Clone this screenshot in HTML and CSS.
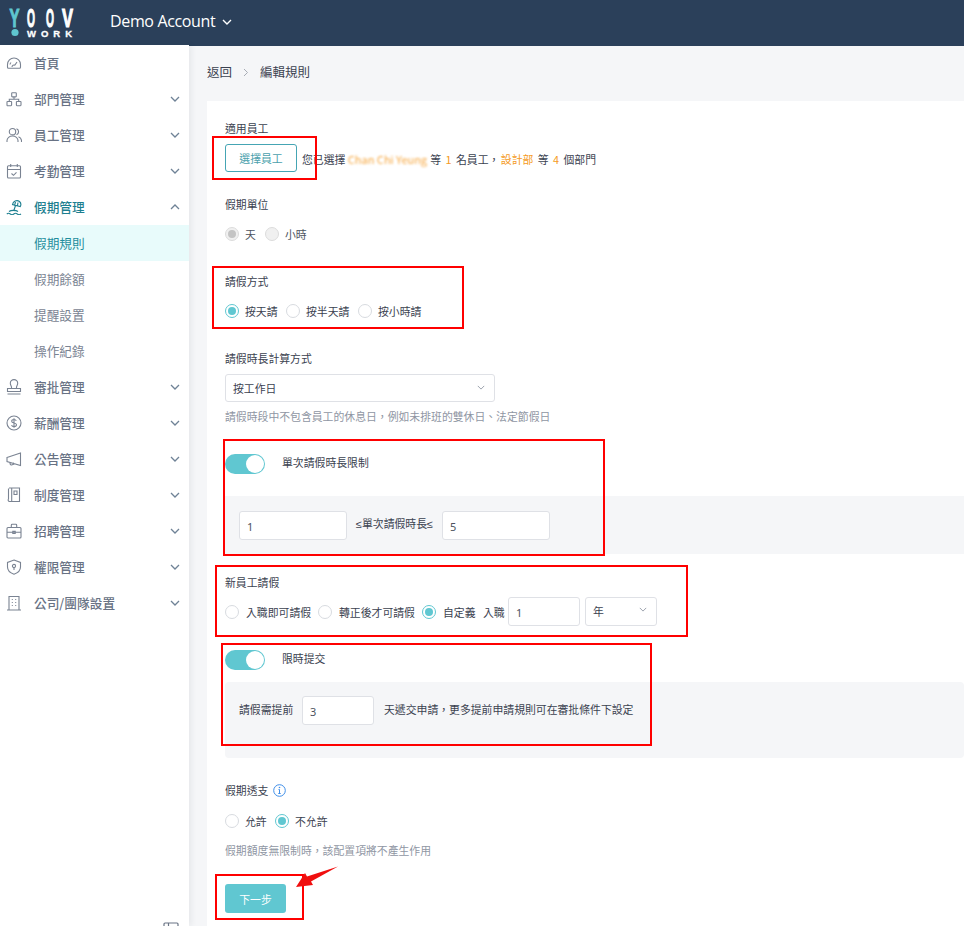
FILE: index.html
```html
<!DOCTYPE html>
<html lang="zh-Hant">
<head>
<meta charset="utf-8">
<title>編輯規則</title>
<link rel="stylesheet" href="styles.css">
</head>
<body>
<div class="app">
  <header class="topbar">
    <svg class="logo" width="90" height="46" viewBox="0 0 90 46">
      <text class="logo-y" x="9.500" y="27" font-size="26" textLength="10" lengthAdjust="spacingAndGlyphs">Y</text>
      <circle cx="15" cy="32.500" r="3.600" fill="#5fc6d0"/>
      <text class="logo-l" x="27" y="27" font-size="26" textLength="8" lengthAdjust="spacingAndGlyphs">O</text>
      <text class="logo-l" x="46" y="27" font-size="26" textLength="8" lengthAdjust="spacingAndGlyphs">O</text>
      <text class="logo-l" x="62" y="27" font-size="26" textLength="11" lengthAdjust="spacingAndGlyphs">V</text>
      <text class="logo-w" x="27" y="36.500" font-size="9.500" textLength="45">WORK</text>
    </svg>
    <div class="account">Demo Account</div>
    <svg class="account-caret" width="10" height="6" viewBox="0 0 10 6"><path d="M1 1l4 4 4-4" fill="none" stroke="#fff" stroke-width="1.400"/></svg>
  </header>
  <div class="layout">
    <nav class="sidebar">
      <a class="nav-item"><svg class="nav-icon" viewBox="0 0 16 16"><path d="M2.500 13.200h11c.6 0 1-.4 1-1V9.500a6.500 6.500 0 0 0-13 0v2.700c0 .6.400 1 1 1z"/><path d="M6 12a2 2 0 0 1 3-1.700M8.600 10.500l2.400-3.500M4 9.500a4 4 0 0 1 1-2"/></svg><span>首頁</span></a>
      <a class="nav-item"><svg class="nav-icon" viewBox="0 0 16 16"><rect x="5.700" y="1.700" width="4.600" height="4.200" rx=".6"/><rect x="1" y="10.500" width="4.600" height="4.200" rx=".6"/><rect x="10.400" y="10.500" width="4.600" height="4.200" rx=".6"/><path d="M8 5.900v2.300M3.300 10.500V8.200h9.400v2.300"/></svg><span>部門管理</span><svg class="chev" viewBox="0 0 10 6"><path d="M1 1l4 4 4-4"/></svg></a>
      <a class="nav-item"><svg class="nav-icon" viewBox="0 0 16 16"><circle cx="6.500" cy="4.700" r="3.200"/><path d="M1 15v-1.500a5.500 4.500 0 0 1 11 0V15M10.500 1.700a3.200 3.200 0 0 1 0 6M12.500 9.800a4.500 4.500 0 0 1 3 3.700V15"/></svg><span>員工管理</span><svg class="chev" viewBox="0 0 10 6"><path d="M1 1l4 4 4-4"/></svg></a>
      <a class="nav-item"><svg class="nav-icon" viewBox="0 0 16 16"><rect x="1.500" y="2.700" width="13" height="12.300" rx="1"/><path d="M1.500 6.500h13M4.700 1v3M11.300 1v3M5.500 10.500l2 1.800 3-3"/></svg><span>考勤管理</span><svg class="chev" viewBox="0 0 10 6"><path d="M1 1l4 4 4-4"/></svg></a>
      <a class="nav-item nav-active"><svg class="nav-icon" viewBox="0 0 16 16"><path d="M6.500 5.500A4.500 4.500 0 0 1 13.500 2.500a4.200 4.200 0 0 1 .8 5zM9.500 3l-1 3.800M12 3.500l-.6 3.500M9.500 6.500l-1.800 5.500"/><path d="M3 12.500c2-1.500 7-1.500 9 0M.8 15c1.200-1 2.300-1 3.500 0s2.300 1 3.500 0 2.300-1 3.500 0 2.300 1 3.700 0"/></svg><span>假期管理</span><svg class="chev" viewBox="0 0 10 6"><path d="M1 5l4-4 4 4"/></svg></a>
      <a class="nav-sub nav-sub-active">假期規則</a>
      <a class="nav-sub">假期餘額</a>
      <a class="nav-sub">提醒設置</a>
      <a class="nav-sub">操作紀錄</a>
      <a class="nav-item"><svg class="nav-icon" viewBox="0 0 16 16"><path d="M5.500 9.500V8c0-1-1.200-2-1.200-3.700a3.700 3.700 0 0 1 7.400 0C11.700 6 10.500 7 10.500 8v1.500M1.500 9.500h13v3h-13zM1.500 15h13"/></svg><span>審批管理</span><svg class="chev" viewBox="0 0 10 6"><path d="M1 1l4 4 4-4"/></svg></a>
      <a class="nav-item"><svg class="nav-icon" viewBox="0 0 16 16"><circle cx="8" cy="8" r="7"/><path d="M10.300 5.800C9.800 4.800 8.800 4.500 8 4.500c-1.300 0-2.300.7-2.300 1.800C5.700 8.700 10.500 7.300 10.500 9.800c0 1-1 1.800-2.500 1.800-1 0-2-.4-2.500-1.400M8 3.300v9.400"/></svg><span>薪酬管理</span><svg class="chev" viewBox="0 0 10 6"><path d="M1 1l4 4 4-4"/></svg></a>
      <a class="nav-item"><svg class="nav-icon" viewBox="0 0 16 16"><path d="M1 6.500l13.500-4.500v12.500L1 10.500zM3.800 11.300l.5 2c.1.500.7.800 1.200.6l2.300-.7-.4-1.500"/></svg><span>公告管理</span><svg class="chev" viewBox="0 0 10 6"><path d="M1 1l4 4 4-4"/></svg></a>
      <a class="nav-item"><svg class="nav-icon" viewBox="0 0 16 16"><path d="M3 1h10.500v13.500H3.500A1.500 1.500 0 0 1 2.500 12V1.500M5.700 1v13.500M8 4h3v3.500H8z"/></svg><span>制度管理</span><svg class="chev" viewBox="0 0 10 6"><path d="M1 1l4 4 4-4"/></svg></a>
      <a class="nav-item"><svg class="nav-icon" viewBox="0 0 16 16"><rect x="1" y="4.500" width="14" height="10.500" rx="1"/><path d="M5.300 4.500V2.200c0-.5.400-.9.900-.9h3.600c.5 0 .9.400.9.900v2.300M1 9.300h14M6.800 8.300h2.400v2.200H6.800z"/></svg><span>招聘管理</span><svg class="chev" viewBox="0 0 10 6"><path d="M1 1l4 4 4-4"/></svg></a>
      <a class="nav-item"><svg class="nav-icon" viewBox="0 0 16 16"><path d="M8 1l6.500 2.500V8c0 3.500-3 6-6.500 7.200C4.500 14 1.500 11.500 1.500 8V3.500z"/><circle cx="8" cy="7" r="1.600"/><path d="M8 8.600v2.400"/></svg><span>權限管理</span><svg class="chev" viewBox="0 0 10 6"><path d="M1 1l4 4 4-4"/></svg></a>
      <a class="nav-item"><svg class="nav-icon" viewBox="0 0 16 16"><path d="M3 15V1.500h10V15M1 15h14M5.800 4.500h1M9.200 4.500h1M5.800 7.500h1M9.200 7.500h1M5.800 10.500h1M9.200 10.500h1"/></svg><span>公司/團隊設置</span><svg class="chev" viewBox="0 0 10 6"><path d="M1 1l4 4 4-4"/></svg></a>
      <svg class="collapse" width="16" height="12" viewBox="0 0 16 12"><path d="M1 11V2c0-.6.400-1 1-1h12c.6 0 1 .4 1 1v9M5.500 1v10" fill="none" stroke="#6b7585" stroke-width="1.200"/></svg>
    </nav>
    <main class="main">
      <div class="crumbs"><span>返回</span><svg class="crumb-sep" width="6" height="9" viewBox="0 0 6 9"><path d="M1 1l3.500 3.500L1 8" fill="none" stroke="#a7acb5" stroke-width="1"/></svg><span>編輯規則</span></div>
      <form class="card">
        <div class="label first">適用員工</div>
        <div class="pick-row">
          <div class="btn-outline">選擇員工</div>
          <div class="pick-text">您已選擇 <span class="orange blur">Chan Chi Yeung</span> 等 <span class="orange">1</span> 名員工， <span class="orange dept">設計部</span> 等 <span class="orange">4</span> 個部門</div>
        </div>

        <div class="label gap-24">假期單位</div>
        <div class="radios">
          <span class="radio disabled on"></span><span class="opt muted w-20">天</span>
          <span class="radio disabled"></span><span class="opt muted">小時</span>
        </div>

        <div class="label gap-32">請假方式</div>
        <div class="radios">
          <span class="radio on"></span><span class="opt w-41">按天請</span>
          <span class="radio"></span><span class="opt w-52">按半天請</span>
          <span class="radio"></span><span class="opt">按小時請</span>
        </div>

        <div class="label gap-32">請假時長計算方式</div>
        <div class="select wide">按工作日<svg class="select-caret" viewBox="0 0 10 6"><path d="M1 1l4 4 4-4"/></svg></div>
        <div class="hint gap-6">請假時段中不包含員工的休息日，例如未排班的雙休日、法定節假日</div>

        <div class="toggle-row gap-30"><span class="toggle"></span><span class="toggle-label">單次請假時長限制</span></div>
        <div class="panel panel-limit">
          <div class="input w-108">1</div>
          <span class="between">≤單次請假時長≤</span>
          <div class="input w-108">5</div>
        </div>

        <div class="label gap-20">新員工請假</div>
        <div class="radios tall">
          <span class="radio"></span><span class="opt w-72">入職即可請假</span>
          <span class="radio"></span><span class="opt w-83">轉正後才可請假</span>
          <span class="radio on"></span><span class="opt w-40">自定義</span>
          <span class="opt w-25">入職</span>
          <div class="input w-72">1</div>
          <div class="select narrow">年<svg class="select-caret" viewBox="0 0 10 6"><path d="M1 1l4 4 4-4"/></svg></div>
        </div>

        <div class="toggle-row gap-24"><span class="toggle"></span><span class="toggle-label">限時提交</span></div>
        <div class="panel panel-notice">
          <span class="notice-a">請假需提前</span>
          <div class="input w-72">3</div>
          <span class="notice-b">天遞交申請，更多提前申請規則可在審批條件下設定</span>
        </div>

        <div class="label gap-24 with-icon">假期透支<svg class="info" width="13" height="13" viewBox="0 0 13 13"><circle cx="6.500" cy="6.500" r="5.800" fill="none" stroke="#3f8ee8" stroke-width="1"/><path d="M6.500 5.500v4M5.300 9.500h2.400M5.500 5.500h1" fill="none" stroke="#3f8ee8" stroke-width="1"/><circle cx="6.500" cy="3.500" r=".8" fill="#3f8ee8"/></svg></div>
        <div class="radios gap-16">
          <span class="radio"></span><span class="opt w-28">允許</span>
          <span class="radio on"></span><span class="opt">不允許</span>
        </div>
        <div class="hint gap-14">假期額度無限制時，該配置項將不產生作用</div>
        <div class="btn-primary">下一步</div>
      </form>
    </main>
  </div>
  <div class="mark mark-a"></div>
  <div class="mark mark-b"></div>
  <div class="mark mark-c"></div>
  <div class="mark mark-d"></div>
  <div class="mark mark-e"></div>
  <div class="mark mark-f"></div>
  <svg class="arrow" width="46" height="24" viewBox="0 0 46 24"><path d="M43 0.500L16 15.500l2 3.500L1 21l9-14 2 3.500z" fill="#f00f0f"/></svg>
</div>
</body>
</html>
```
FILE: styles.css
```css
* { box-sizing: border-box; }
html, body { margin: 0; padding: 0; height: 100%; overflow: hidden; }
body { font-family: "Noto Sans CJK TC", "Noto Sans", sans-serif; font-size: 10.850px; color: #3b4250; background: #fff; }
.app { position: relative; width: 964px; height: 926px; display: flex; flex-direction: column; overflow: hidden; }

.topbar { height: 46px; flex: none; background: #2b405a; display: flex; align-items: center; }
.logo { flex: none; margin-right: 20px; }
.logo text { font-family: "Liberation Sans", sans-serif; font-weight: 700; }
.logo-y { fill: #5fc6d0; stroke: #5fc6d0; stroke-width: 1.200; }
.logo-l { fill: #fff; stroke: #fff; stroke-width: 1.200; }
.logo-w { fill: #fff; stroke: #fff; stroke-width: .3; }
.account { color: #fff; font-family: "Open Sans", sans-serif; font-size: 16px; letter-spacing: -.35px; margin: 0 7px 4px 0; }
.account-caret { margin-bottom: 3px; }

.layout { flex: 1; display: flex; min-height: 0; }
.sidebar { position: relative; width: 189px; flex: none; background: #fff; box-shadow: 2px 0 6px rgba(40, 50, 70, .08); margin-top: -1px; z-index: 1; }
.nav-item { height: 36px; display: flex; align-items: center; padding: 0 9px 0 6px; font-size: 12.700px; color: #687284; font-weight: 500; }
.nav-item span { margin: -2px 0 0 12px; }
.nav-icon { width: 16px; height: 16px; flex: none; fill: none; stroke: #7a8392; stroke-width: 1.100; }
.chev { width: 10px; height: 6px; margin-left: auto; fill: none; stroke: #6f8296; stroke-width: 1.300; }
.nav-active { color: #1d7f90; }
.nav-active .nav-icon { stroke: #1d7f90; }
.nav-sub { height: 36px; display: flex; align-items: center; padding: 0 0 2px 34px; font-size: 12.700px; color: #7a8392; }
.nav-sub-active { background: #e8fbfb; color: #1f8d9d; }
.collapse { position: absolute; left: 163px; top: 877px; }

.main { flex: 1; min-width: 0; background: #f5f6f8; padding-left: 18px; display: flex; flex-direction: column; }
.crumbs { height: 55px; flex: none; display: flex; align-items: center; padding-bottom: 5px; font-size: 12.500px; color: #3b4250; }
.crumb-sep { margin: 3px 11px 0 11px; }
.card { flex: 1; background: #fff; padding: 19px 0 0 18px; }

.label, .hint { height: 16px; line-height: 16px; white-space: nowrap; }
.label { color: #3b4250; }
.hint { color: #8f96a3; }
.gap-6 { margin-top: 6px; }
.gap-14 { margin-top: 14px; }
.gap-16 { margin-top: 16px; }
.gap-20 { margin-top: 20px; }
.gap-24 { margin-top: 24px; }
.gap-30 { margin-top: 30px; }
.gap-32 { margin-top: 32px; }
.with-icon { display: flex; align-items: center; }
.info { margin-left: 5px; }

.pick-row { display: flex; align-items: center; margin-top: 8px; }
.btn-outline { width: 72px; height: 28px; border: 1px solid #45a5b4; border-radius: 3px; display: flex; align-items: center; justify-content: center; color: #4c9fad; }
.pick-text { margin: 1px 0 0 5px; white-space: pre; color: #3b4250; word-spacing: 2px; }
.orange { color: #f59a23; }
.dept { margin-left: -3px; }
.blur { filter: blur(1.300px); display: inline-block; width: 78px; margin-left: -2px; opacity: .85; white-space: nowrap; word-spacing: 0; font-size: 11px; }

.radios { display: flex; align-items: center; height: 14px; margin-top: 15px; white-space: nowrap; }
.radios.gap-16 { margin-top: 16px; }
.radios.tall { height: 29px; margin-top: 7px; }
.radio { width: 14px; height: 14px; flex: none; border: 1px solid #d8dbe0; border-radius: 50%; background: #fff; position: relative; }
.radio.on { border-color: #60c7d1; }
.radio.on::after { content: ""; position: absolute; inset: 2px; border-radius: 50%; background: #60c7d1; }
.radio.disabled { background: #f0f0f0; border-color: #dcdcdc; }
.radio.disabled.on::after { background: #c4c4c4; }
.opt { margin-left: 6px; color: #3b4250; }
.opt.muted { color: #4d5360; }
.w-20 { width: 20px; }
.w-28 { width: 22px; margin-right: 8px; }
.w-41 { width: 35px; margin-right: 6px; }
.w-52 { width: 46px; margin-right: 6px; }
.w-72.opt { width: 65px; margin-left: 7px; margin-right: 7px; }
.w-83 { width: 76px; margin-left: 7px; margin-right: 7px; }
.w-40 { width: 32px; margin-left: 7px; margin-right: 8px; }
.w-25 { width: 21px; margin-left: 0; margin-right: 4px; }

.select { display: flex; align-items: center; justify-content: space-between; height: 28px; border: 1px solid #dfe1e6; border-radius: 3px; background: #fff; color: #3b4250; }
.select.wide { width: 270px; margin-top: 8px; padding: 0 8px 0 7px; }
.select.narrow { width: 72px; height: 29px; margin-left: 5px; padding: 0 8px 2px 7px; }
.select-caret { width: 8px; height: 5px; fill: none; stroke: #8f96a3; stroke-width: 1.100; margin: 0 1.500px 2px 0; }

.toggle-row { display: flex; align-items: center; height: 20px; }
.toggle { width: 40px; height: 20px; flex: none; border-radius: 10px; background: #60c7d1; position: relative; }
.toggle::after { content: ""; position: absolute; right: 1px; top: 1px; width: 18px; height: 18px; border-radius: 50%; background: #fff; }
.toggle-label { margin: -4px 0 0 17px; color: #3b4250; }

.panel { display: flex; background: #f5f6f8; padding-left: 14px; }
.panel-limit { height: 58px; margin-top: 22px; padding-top: 15px; align-items: flex-start; }
.panel-notice { height: 76px; margin-top: 12px; padding-top: 14px; align-items: flex-start; border-radius: 4px; }
.input { height: 29px; border: 1px solid #dfe1e6; border-radius: 3px; background: #fff; padding: 3px 0 0 7px; color: #4d5360; font-family: "Noto Sans", sans-serif; font-size: 11px; line-height: 24px; flex: none; }
.input.w-108 { width: 108px; }
.input.w-72 { width: 72px; }
.between { width: 95px; text-align: center; line-height: 26px; flex: none; font-family: "Liberation Sans", "Noto Sans CJK TC", sans-serif; }
.notice-a { width: 63px; line-height: 27px; flex: none; }
.notice-b { margin-left: 10px; line-height: 27px; white-space: nowrap; }
.btn-primary { width: 61px; height: 29px; margin-top: 26px; border-radius: 3px; background: #60c7d1; color: #fff; display: flex; align-items: center; justify-content: center; }

.mark { position: absolute; border: 2.500px solid #f00; pointer-events: none; z-index: 5; }
.mark-a { left: 212px; top: 136px; width: 105px; height: 44px; }
.mark-b { left: 212px; top: 266px; width: 252px; height: 63px; }
.mark-c { left: 223px; top: 439px; width: 382px; height: 117px; }
.mark-d { left: 215px; top: 565px; width: 473px; height: 72px; }
.mark-e { left: 221px; top: 643px; width: 431px; height: 103px; }
.mark-f { left: 215px; top: 874px; width: 89px; height: 46px; }
.arrow { position: absolute; left: 295px; top: 866px; z-index: 6; }
```
